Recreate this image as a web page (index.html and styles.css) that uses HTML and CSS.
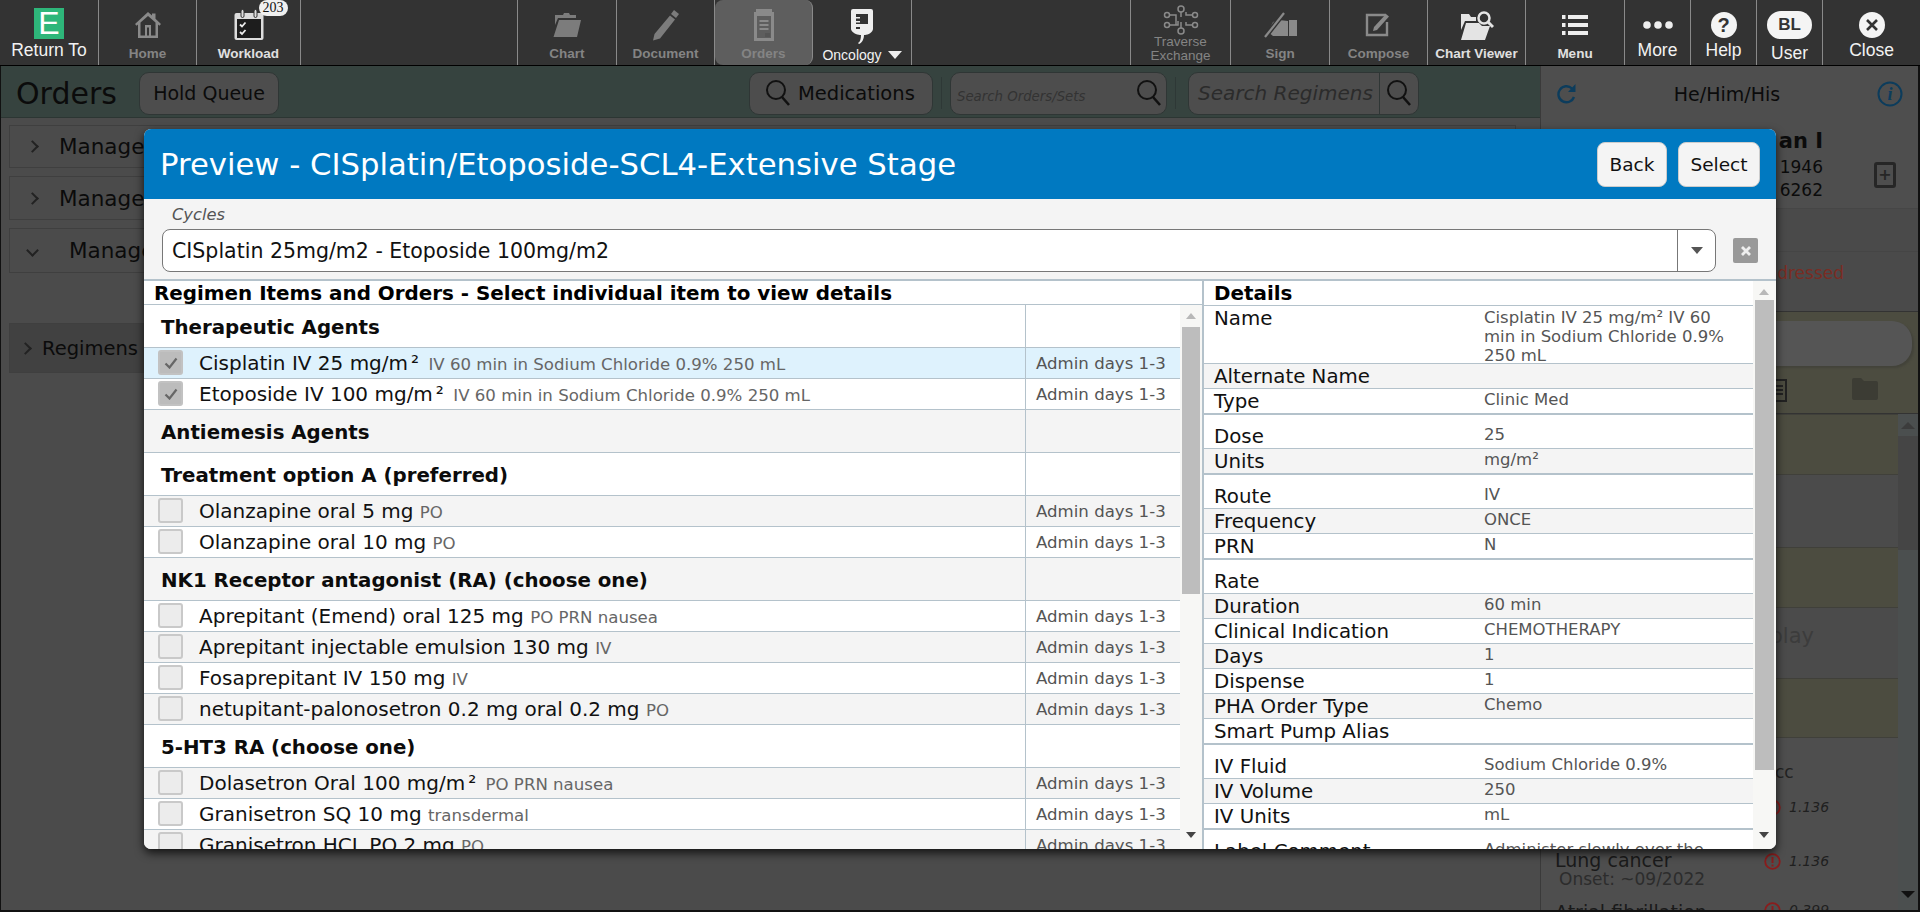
FILE: index.html
```html
<!DOCTYPE html>
<html lang="en">
<head>
<meta charset="utf-8">
<title>Orders</title>
<link rel="stylesheet" href="styles.css">
</head>
<body>
<div class="page">
  <header class="topbar">
    <div class="nav w99 on"><div class="ic"><span class="elogo">E</span></div><span class="lab">Return To</span></div>
    <div class="nav w98 dis"><div class="ic"><svg width="26" height="27" viewBox="0 0 26 27"><path fill="#8a8a8a" d="M13 0l4 3.6V1.5h3.5v5.2L26 12l-1.6 1.8-1.4-1.3V26H3V12.5l-1.4 1.3L0 12zM13 4L5.5 10.6V23.5H10V13h6v10.5h4.500V10.600zM12 15.500V23.500h2V15.500z"/></svg></div><span class="lab bold">Home</span></div>
    <div class="nav w104 on bold-on"><div class="ic"><svg width="32" height="32" viewBox="0 0 32 32"><rect x="1.500" y="4" width="29" height="27" rx="2" fill="#ddd"/><rect x="4" y="10" width="24" height="19" fill="#1d1d1d"/><rect x="8" y="0.500" width="3" height="8" rx="1.500" fill="#ddd" stroke="#333"/><rect x="21" y="0.500" width="3" height="8" rx="1.500" fill="#ddd" stroke="#333"/><path d="M7 15.500l2 2 3.500-4M7 23l2 2 3.500-4" fill="none" stroke="#eee" stroke-width="1.800"/></svg><span class="badge">203</span></div><span class="lab bold">Workload</span></div>
    <div class="spacer s1"></div>
    <div class="nav w100 dis first"><div class="ic"><svg width="28" height="24" viewBox="0 0 28 24"><path fill="#7c7c7c" d="M2 2h8l1-2h5l1 2h6v3H5L2 12zM6 7h22l-4 17H0.500z"/></svg></div><span class="lab bold">Chart</span></div>
    <div class="nav w98 dis"><div class="ic"><svg width="28" height="34" viewBox="0 0 28 34"><path fill="#7c7c7c" d="M22 2l5 4-3 4-5-4zM18 7.500l5 4-15 19-7 2 1.500-6.500z"/></svg></div><span class="lab bold">Document</span></div>
    <div class="nav w98 dis cur"><div class="ic"><svg width="22" height="32" viewBox="0 0 22 32"><path fill="#8a8a8a" d="M1 3h20v29H1zM4 7v22h14V7z"/><path fill="#8a8a8a" d="M3 0h16v4H3zM6.500 11h9v2h-9zM6.500 15h9v2h-9zM6.500 19h9v2h-9z"/><rect x="12" y="24" width="5" height="4" fill="#555"/></svg></div><span class="lab bold">Orders</span></div>
    <div class="nav w99 on"><div class="ic tall"><svg width="22" height="36" viewBox="0 0 22 36"><path fill="#eee" d="M2 0h18a2 2 0 0 1 2 2v18c0 3-5 6-8 6h-1c0 4-2 8-5 9l-1-1c2-1 3-4 3-8h-1c-3 0-9-3-9-6V2a2 2 0 0 1 2-2z"/><rect x="5" y="5" width="12" height="10" fill="#333"/><rect x="5" y="8" width="4" height="1.500" fill="#eee"/><rect x="5" y="12" width="4" height="1.500" fill="#eee"/><rect x="5" y="18" width="4" height="2" fill="#333"/></svg></div><span class="lab onc">Oncology<i class="tri"></i></span></div>
    <div class="spacer s2"></div>
    <div class="nav w101 dis tight first"><div class="ic"><svg width="36" height="30" viewBox="0 0 36 30" fill="none" stroke="#8a8a8a" stroke-width="1.500"><circle cx="18" cy="4" r="3"/><circle cx="18" cy="26" r="3"/><circle cx="4" cy="10" r="2.500"/><circle cx="32" cy="10" r="2.500"/><circle cx="4" cy="20" r="2.500"/><circle cx="32" cy="20" r="2.500"/><path d="M7 10h6v10M29 10h-6v-3M18 7v5M18 17v6M7 20h8v-4M29 20h-6v-3"/></svg></div><span class="lab two">Traverse<br>Exchange</span></div>
    <div class="nav w99 dis"><div class="ic"><svg width="33" height="26" viewBox="0 0 33 26"><path fill="#8a8a8a" d="M25 8h8v16h-8zM9 10l6-2 9 1v15H9l-5-4z"/><path d="M1 25L20 1" stroke="#333" stroke-width="5"/><path d="M1 25L20 1" stroke="#8a8a8a" stroke-width="2.200"/></svg></div><span class="lab bold">Sign</span></div>
    <div class="nav w98 dis"><div class="ic"><svg width="28" height="24" viewBox="0 0 28 24" fill="none"><path d="M21 2H2v20h20V9" stroke="#8a8a8a" stroke-width="2.400"/><path d="M8 18l1-4L21 1l3 2.500L12 17z" fill="#8a8a8a"/></svg></div><span class="lab bold">Compose</span></div>
    <div class="nav w98 on"><div class="ic"><svg width="34" height="30" viewBox="0 0 34 30"><path fill="#e4e4e4" d="M1 4h8l2 3h5v4H5L1 20z"/><path fill="#e4e4e4" d="M6 13h13l3 3h8L25 30H1z"/><circle cx="24" cy="8" r="5.500" fill="#333" stroke="#e4e4e4" stroke-width="2.500"/><path d="M28 12l5 5" stroke="#e4e4e4" stroke-width="3"/></svg></div><span class="lab bold">Chart Viewer</span></div>
    <div class="nav w99 on"><div class="ic"><svg width="26" height="20" viewBox="0 0 26 20" fill="#eee"><rect width="3.500" height="4"/><rect x="6" width="20" height="4"/><rect y="8" width="3.500" height="4"/><rect x="6" y="8" width="20" height="4"/><rect y="16" width="3.500" height="4"/><rect x="6" y="16" width="20" height="4"/></svg></div><span class="lab bold">Menu</span></div>
    <div class="nav w66 on"><div class="ic"><svg width="30" height="8" viewBox="0 0 30 8" fill="#eee"><circle cx="4" cy="4" r="3.800"/><circle cx="15" cy="4" r="3.800"/><circle cx="26" cy="4" r="3.800"/></svg></div><span class="lab">More</span></div>
    <div class="nav w66 on"><div class="ic"><span class="disc">?</span></div><span class="lab">Help</span></div>
    <div class="nav w66 on"><div class="ic"><span class="userpill">BL</span></div><span class="lab low">User</span></div>
    <div class="nav grow on last"><div class="ic"><span class="disc x"><svg width="14" height="14" viewBox="0 0 14 14"><path d="M2 2l10 10M12 2L2 12" stroke="#333" stroke-width="2.600"/></svg></span></div><span class="lab">Close</span></div>
  </header>

  <main class="main">
    <section class="left">
      <div class="phead">
        <h1 class="ptitle">Orders</h1>
        <button class="bgbtn hold">Hold Queue</button>
        <button class="bgbtn meds"><svg class="mag" width="26" height="28" viewBox="0 0 26 28"><circle cx="11" cy="11" r="9" fill="none" stroke="#111" stroke-width="2"/><path d="M17 18l7 8" stroke="#111" stroke-width="2.500"/></svg>Medications</button>
        <i class="vsep"></i>
        <div class="bgbtn sorders"><em>Search Orders/Sets</em><svg class="mag" width="26" height="28" viewBox="0 0 26 28"><circle cx="11" cy="11" r="9" fill="none" stroke="#111" stroke-width="2"/><path d="M17 18l7 8" stroke="#111" stroke-width="2.500"/></svg></div>
        <i class="vsep"></i>
        <div class="bgbtn sreg"><em>Search Regimens</em><span class="regbtn"><svg class="mag" width="26" height="28" viewBox="0 0 26 28"><circle cx="11" cy="11" r="9" fill="none" stroke="#111" stroke-width="2"/><path d="M17 18l7 8" stroke="#111" stroke-width="2.500"/></svg></span></div>
      </div>
      <div class="acc">
        <div class="acc-row h43"><i class="chev"></i><span>Manage</span></div>
        <div class="acc-row h44"><i class="chev"></i><span>Manage</span></div>
        <div class="acc-row h45 open"><i class="chev down"></i><span>Manage</span></div>
        <div class="acc-row reg"><i class="chev"></i><span>Regimens</span></div>
      </div>
    </section>

    <aside class="right">
      <div class="pat">
        <div class="pat-top">
          <svg width="20" height="22" viewBox="0 0 20 22" fill="none"><path d="M17 14a8 8 0 1 1-2-8.500" stroke="#0c3c5c" stroke-width="2.400"/><path d="M18.500 1v8h-7.500z" fill="#0c3c5c"/></svg>
          <span class="pron">He/Him/His</span>
          <svg width="26" height="26" viewBox="0 0 26 26"><circle cx="13" cy="13" r="11.500" fill="none" stroke="#0c3c5c" stroke-width="2"/><text x="13" y="19" text-anchor="middle" class="itxt">i</text></svg>
        </div>
        <div class="pat-main">
          <div class="pat-info"><b>an I</b><span>1946</span><span>6262</span></div>
          <span class="plus">+</span>
        </div>
      </div>
      <div class="band b1"></div>
      <div class="band b2"><span>ddressed</span></div>
      <div class="yellow">
        <div class="pill"></div>
        <div class="tools">
          <svg width="16" height="26" viewBox="0 0 16 26"><path fill="none" stroke="#222" stroke-width="2" d="M1 4h14v21H1z"/><path stroke="#222" stroke-width="2" d="M4 10h8M4 14h8M4 18h8"/></svg>
          <svg class="folder" width="26" height="22" viewBox="0 0 26 22"><path fill="#3c3c34" d="M0 2a2 2 0 0 1 2-2h7l3 3h12a2 2 0 0 1 2 2v15a2 2 0 0 1-2 2H2a2 2 0 0 1-2-2z"/></svg>
        </div>
      </div>
      <div class="plist">
        <div class="items">
          <div class="it ye h61"></div>
          <div class="it h72"></div>
          <div class="it ye h61"></div>
          <div class="it h70 playrow"><span>play</span></div>
          <div class="it ye h60"></div>
          <div class="prow first"><span></span><span class="cc">cc</span></div>
          <div class="prow second"><span></span><span class="score"><svg width="17" height="17" viewBox="0 0 17 17"><circle cx="8.500" cy="8.500" r="7.300" fill="none" stroke="#8a1c1c" stroke-width="1.800"/><path d="M8.500 4v6M8.500 11.500v2" stroke="#8a1c1c" stroke-width="2"/></svg><em>1.136</em></span></div>
          <div class="prow lung"><span>Lung cancer<small>Onset: ~09/2022</small></span><span class="score"><svg width="17" height="17" viewBox="0 0 17 17"><circle cx="8.500" cy="8.500" r="7.300" fill="none" stroke="#8a1c1c" stroke-width="1.800"/><path d="M8.500 4v6M8.500 11.500v2" stroke="#8a1c1c" stroke-width="2"/></svg><em>1.136</em></span></div>
          <div class="prow af"><span>Atrial fibrillation</span><span class="score"><svg width="17" height="17" viewBox="0 0 17 17"><circle cx="8.500" cy="8.500" r="7.300" fill="none" stroke="#8a1c1c" stroke-width="1.800"/><path d="M8.500 4v6M8.500 11.500v2" stroke="#8a1c1c" stroke-width="2"/></svg><em>0.399</em></span></div>
        </div>
        <div class="bgscroll"><i class="up"></i><div class="bgthumb"></div><i class="dn"></i></div>
      </div>
    </aside>
  </main>

  <div class="modal">
    <div class="m-head">
      <h2 class="m-title">Preview - CISplatin/Etoposide-SCL4-Extensive Stage</h2>
      <button class="m-btn back">Back</button>
      <button class="m-btn sel">Select</button>
    </div>
    <div class="m-cycles">
      <div class="cy-label">Cycles</div>
      <div class="cy-row">
        <div class="cy-select"><span class="cy-val">CISplatin 25mg/m2 - Etoposide 100mg/m2</span><span class="cy-drop"><i class="tri dark"></i></span></div>
        <span class="cy-clear"><svg width="14" height="14" viewBox="0 0 14 14"><path d="M3 3l8 8M11 3l-8 8" stroke="#eee" stroke-width="2.800"/></svg></span>
      </div>
    </div>
    <div class="m-body">
      <div class="col-l">
        <div class="th">Regimen Items and Orders - Select individual item to view details</div>
        <div class="scroller">
          <div class="rows">
            <div class="group"><span class="g-name">Therapeutic Agents</span><span class="adm"></span></div>
            <div class="row selrow"><i class="cb on"><svg width="14" height="12" viewBox="0 0 14 12"><path d="M1.500 6.500l4 4 7-9" fill="none" stroke="#666" stroke-width="2.200"/></svg></i><span class="r-name">Cisplatin IV 25 mg/m<span class="sq">²</span> <small>IV 60 min in Sodium Chloride 0.9% 250 mL</small></span><span class="adm">Admin days 1-3</span></div>
            <div class="row"><i class="cb on"><svg width="14" height="12" viewBox="0 0 14 12"><path d="M1.500 6.500l4 4 7-9" fill="none" stroke="#666" stroke-width="2.200"/></svg></i><span class="r-name">Etoposide IV 100 mg/m<span class="sq">²</span> <small>IV 60 min in Sodium Chloride 0.9% 250 mL</small></span><span class="adm">Admin days 1-3</span></div>
            <div class="group alt"><span class="g-name">Antiemesis Agents</span><span class="adm"></span></div>
            <div class="group"><span class="g-name">Treatment option A (preferred)</span><span class="adm"></span></div>
            <div class="row alt"><i class="cb"></i><span class="r-name">Olanzapine oral 5 mg <small>PO</small></span><span class="adm">Admin days 1-3</span></div>
            <div class="row"><i class="cb"></i><span class="r-name">Olanzapine oral 10 mg <small>PO</small></span><span class="adm">Admin days 1-3</span></div>
            <div class="group alt"><span class="g-name">NK1 Receptor antagonist (RA) (choose one)</span><span class="adm"></span></div>
            <div class="row"><i class="cb"></i><span class="r-name">Aprepitant (Emend) oral 125 mg <small>PO PRN nausea</small></span><span class="adm">Admin days 1-3</span></div>
            <div class="row alt"><i class="cb"></i><span class="r-name">Aprepitant injectable emulsion 130 mg <small>IV</small></span><span class="adm">Admin days 1-3</span></div>
            <div class="row"><i class="cb"></i><span class="r-name">Fosaprepitant IV 150 mg <small>IV</small></span><span class="adm">Admin days 1-3</span></div>
            <div class="row alt"><i class="cb"></i><span class="r-name">netupitant-palonosetron 0.2 mg oral 0.2 mg <small>PO</small></span><span class="adm">Admin days 1-3</span></div>
            <div class="group"><span class="g-name">5-HT3 RA (choose one)</span><span class="adm"></span></div>
            <div class="row alt"><i class="cb"></i><span class="r-name">Dolasetron Oral 100 mg/m<span class="sq">²</span> <small>PO PRN nausea</small></span><span class="adm">Admin days 1-3</span></div>
            <div class="row"><i class="cb"></i><span class="r-name">Granisetron SQ 10 mg <small>transdermal</small></span><span class="adm">Admin days 1-3</span></div>
            <div class="row alt"><i class="cb"></i><span class="r-name">Granisetron HCL PO 2 mg <small>PO</small></span><span class="adm">Admin days 1-3</span></div>
          </div>
          <div class="sb"><i class="up"></i><div class="thumb t-l"></div><i class="dn"></i></div>
        </div>
      </div>
      <div class="col-r">
        <div class="d-rows">
          <div class="th d">Details</div>
          <div class="d name"><span class="k">Name</span><span class="v">Cisplatin IV 25 mg/m² IV 60 min in Sodium Chloride 0.9% 250 mL</span></div>
          <div class="d alt"><span class="k">Alternate Name</span><span class="v"></span></div>
          <div class="d end"><span class="k">Type</span><span class="v">Clinic Med</span></div>
          <div class="d start"><span class="k">Dose</span><span class="v">25</span></div>
          <div class="d alt end"><span class="k">Units</span><span class="v">mg/m²</span></div>
          <div class="d start"><span class="k">Route</span><span class="v">IV</span></div>
          <div class="d alt"><span class="k">Frequency</span><span class="v">ONCE</span></div>
          <div class="d end"><span class="k">PRN</span><span class="v">N</span></div>
          <div class="d start"><span class="k">Rate</span><span class="v"></span></div>
          <div class="d alt"><span class="k">Duration</span><span class="v">60 min</span></div>
          <div class="d"><span class="k">Clinical Indication</span><span class="v">CHEMOTHERAPY</span></div>
          <div class="d alt"><span class="k">Days</span><span class="v">1</span></div>
          <div class="d"><span class="k">Dispense</span><span class="v">1</span></div>
          <div class="d alt"><span class="k">PHA Order Type</span><span class="v">Chemo</span></div>
          <div class="d end"><span class="k">Smart Pump Alias</span><span class="v"></span></div>
          <div class="d start"><span class="k">IV Fluid</span><span class="v">Sodium Chloride 0.9%</span></div>
          <div class="d alt"><span class="k">IV Volume</span><span class="v">250</span></div>
          <div class="d end"><span class="k">IV Units</span><span class="v">mL</span></div>
          <div class="d start"><span class="k">Label Comment</span><span class="v">Administer slowly over the</span></div>
        </div>
        <div class="sb wide"><i class="up"></i><div class="thumb t-r"></div><i class="dn"></i></div>
      </div>
    </div>
  </div>
</div>
</body>
</html>
```
FILE: styles.css
```css
* { box-sizing: border-box; }
html, body { margin: 0; padding: 0; height: 100%; overflow: hidden; }
body { font-family: "DejaVu Sans", Verdana, sans-serif; background: #4b4b4b; color: #111; }
.page { position: relative; width: 1920px; height: 912px; overflow: hidden; display: flex; flex-direction: column; }
button { font: inherit; color: inherit; }

/* top bar */
.topbar { height: 66px; flex: none; display: flex; background: #333; border-bottom: 1px solid #000; font-family: "Liberation Sans", Arial, sans-serif; }
.nav { height: 65px; padding-top: 8px; display: flex; flex-direction: column; align-items: center; border-right: 1px solid #8a8a8a; flex: none; }
.nav.last { border-right: 0; }
.nav.first { border-left: 1px solid #8a8a8a; }
.w66 { width: 66px; } .w98 { width: 98px; } .w99 { width: 99px; } .w100 { width: 100px; } .w101 { width: 101px; } .w104 { width: 104px; }
.nav.grow { flex: 1; }
.spacer { flex: none; height: 65px; }
.s1 { width: 216px; } .s2 { width: 218px; }
.ic { height: 34px; position: relative; display: flex; align-items: center; justify-content: center; }
.ic.tall { margin-top: 2px; }
.lab { font-size: 17.5px; line-height: 16px; white-space: nowrap; }
.on .lab { color: #f2f2f2; }
.lab.bold { font-size: 13.500px; font-weight: 700; margin-top: 4px; }
.dis .lab { color: #848484; }
.on .lab.bold { color: #e0e0e0; }
.lab.onc { font-size: 14px; margin-top: 3px; display: flex; align-items: center; gap: 6px; }
.lab.low { margin-top: 3px; }
.tight { padding-top: 5px; }
.tight .ic { height: 30px; }
.lab.two { font-size: 13.500px; font-weight: 400; line-height: 14px; text-align: center; }
.tri { display: inline-block; width: 0; height: 0; border-left: 7px solid transparent; border-right: 7px solid transparent; border-top: 8px solid #eee; }
.tri.dark { border-left-width: 6px; border-right-width: 6px; border-top: 7px solid #555; }
.elogo { width: 30px; height: 31px; margin-top: -4px; background: #2eb67a; color: #fff; font-size: 32px; line-height: 31px; text-align: center; }
.badge { position: absolute; left: 26px; top: -8px; width: 29px; height: 16px; border-radius: 8px; background: #f0f0f0; color: #111; font: 14px/16px "Liberation Serif", serif; text-align: center; }
.cur { background: #5e5e5e; border-radius: 8px; }
.disc { width: 26px; height: 26px; border-radius: 50%; background: #f4f4f4; color: #333; font-weight: 700; font-size: 20px; line-height: 26px; text-align: center; display: flex; align-items: center; justify-content: center; }
.userpill { width: 45px; height: 28px; border-radius: 14px; background: #f4f4f4; color: #333; font-weight: 700; font-size: 17px; line-height: 28px; text-align: center; }

/* background page */
.main { flex: 1; min-height: 0; display: flex; border-left: 1px solid #111; border-bottom: 2px solid #111; }
.left { width: 1539px; flex: none; }
.phead { height: 52px; background: #36433f; border-bottom: 1px solid #2c3633; display: flex; align-items: center; padding: 3px 0 0 15px; }
.ptitle { margin: 0; width: 123px; font-size: 30px; font-weight: 400; color: #0b0b0b; }
.bgbtn { height: 43px; border: 1px solid #2f3635; border-radius: 10px; background: #4d4d4d; font-size: 19.500px; color: #0b0b0b; display: flex; align-items: center; }
.hold { width: 140px; justify-content: center; padding: 0; font-size: 19px; }
.meds { width: 184px; margin-left: 470px; padding: 0 0 0 15px; gap: 7px; }
.vsep { width: 1px; height: 32px; background: #2e3836; margin: 0 8px; flex: none; }
.sorders { width: 217px; justify-content: space-between; padding: 0 4px 0 6px; margin-left: 0; }
.sorders em { font-size: 13.300px; color: #333; margin-top: 6px; }
.sreg { width: 231px; margin-left: 4px; padding-left: 9px; justify-content: space-between; }
.sreg em { color: #2b2b2b; font-size: 20px; }
.regbtn { width: 39px; height: 41px; border-left: 1px solid #2f3635; display: flex; align-items: center; justify-content: center; flex: none; }
.acc { padding: 7px 24px 0 8px; height: 200px; }
.acc-row { display: flex; align-items: center; border: 1px solid #3f3f3f; margin-bottom: 8px; font-size: 21.500px; color: #0b0b0b; padding-left: 18px; gap: 22px; }
.h43 { height: 43px; } .h44 { height: 44px; } .h45 { height: 45px; margin-bottom: 50px; }
.acc-row.open { gap: 32px; }
.acc-row.reg { height: 50px; background: #414141; gap: 12px; font-size: 19.500px; padding-left: 11px; }
.chev { width: 9px; height: 9px; border-top: 2px solid #222; border-right: 2px solid #222; transform: rotate(45deg); flex: none; }
.chev.down { transform: rotate(135deg); }

.right { flex: 1; min-width: 0; display: flex; flex-direction: column; background: #4e4e4e; border-left: 1px solid #3a3a3a; border-right: 2px solid #111; }
.pat { height: 142px; flex: none; }
.pat-top { height: 52px; display: flex; align-items: center; justify-content: space-between; padding: 3px 15px 0 16px; }
.pron { font-size: 19px; color: #0b0b0b; }
.itxt { font: italic 700 18px "Liberation Serif", serif; fill: #0c3c5c; }
.pat-main { display: flex; align-items: center; padding-top: 8px; }
.pat-info { width: 283px; display: flex; flex-direction: column; align-items: flex-end; color: #0b0b0b; font-size: 17px; line-height: 23px; padding-right: 1px; }
.pat-info b { font-size: 21px; line-height: 30px; }
.plus { margin: 22px 0 0 50px; width: 22px; height: 26px; border: 3px solid #262626; border-radius: 3px; font-size: 16px; line-height: 19px; font-weight: 700; text-align: center; color: #262626; }
.band { flex: none; border-bottom: 1px solid #454545; }
.b1 { height: 44px; background: #4a4a4a; border-top: 1px solid #464646; }
.b2 { height: 60px; background: #4a4a4a; border-bottom: 1px solid #333; padding: 11px 0 0 211px; color: #7a2c23; font-size: 17px; white-space: nowrap; }
.b2 span { display: block; width: 92px; margin-left: 0; text-align: right; }
.yellow { height: 102px; flex: none; background: #4c4c40; border-bottom: 1px solid #333; padding: 9px 6px 0 10px; }
.pill { height: 45px; border-radius: 20px; background: #555; box-shadow: 2px 2px 2px #43433a; }
.tools { display: flex; padding: 10px 0 0 220px; align-items: center; }
.folder { margin-left: 65px; }
.plist { flex: 1; min-height: 0; display: flex; overflow: hidden; }
.items { width: 357px; flex: none; overflow: hidden; }
.it { background: #4b4b4b; }
.it.ye { background: #4c4c40; border-top: 1px solid #40403a; border-bottom: 1px solid #40403a; }
.h60 { height: 60px; } .h61 { height: 61px; } .h70 { height: 70px; } .h72 { height: 72px; }
.playrow { color: #3c3c3c; font-size: 21px; text-align: right; padding: 16px 84px 0 0; }
.prow { display: grid; grid-template-columns: 1fr 134px; padding-left: 14px; color: #1a1a1a; font-size: 19px; }
.prow.first { height: 57px; padding-top: 24px; }
.prow.second { height: 53px; padding-top: 4px; }
.cc { padding-left: 11px; color: #222; font-size: 17px; }
.lung { height: 54px; padding-top: 2px; line-height: 20px; }
.lung small { display: block; font-size: 17px; line-height: 18px; padding-left: 4px; color: #2c2c2c; }
.lung .score { margin-top: 3px; }
.af { line-height: 20px; }
.score { display: flex; align-items: flex-start; gap: 8px; font-size: 14px; }
.score em { color: #1f1f1f; line-height: 17px; }
.bgscroll { width: 20px; flex: none; background: #4b4f4f; position: relative; padding-top: 22px; }
.bgthumb { height: 114px; background: #454545; }
.bgscroll .up, .bgscroll .dn { position: absolute; left: 3px; width: 0; height: 0; border-left: 7px solid transparent; border-right: 7px solid transparent; }
.bgscroll .up { top: 8px; border-bottom: 7px solid #3c3c3c; }
.bgscroll .dn { bottom: 12px; border-top: 7px solid #111; }

/* modal */
.modal { position: absolute; left: 144px; top: 129px; width: 1632px; height: 720px; border-radius: 7px; overflow: hidden; background: #fff; box-shadow: 0 4px 10px rgba(0,0,0,.75); display: flex; flex-direction: column; }
.m-head { height: 70px; flex: none; background: #0079c1; display: flex; align-items: center; padding: 0 16px 0 16px; }
.m-title { margin: 0; flex: 1; color: #fff; font-size: 30.700px; font-weight: 400; white-space: nowrap; }
.m-btn { height: 45px; border: 1px solid #ccc; border-radius: 8px; background: #f4f4f4; color: #111; padding: 0; font-size: 18.500px; }
.back { width: 70px; margin-right: 11px; }
.sel { width: 82px; }
.m-cycles { height: 80px; flex: none; background: #f4f4f4; padding: 3px 0 0 18px; }
.cy-label { font-size: 16.300px; font-style: italic; line-height: 25px; padding-left: 10px; color: #555; }
.cy-row { display: flex; align-items: center; margin-top: 2px; }
.cy-select { width: 1554px; height: 43px; background: #fff; border: 1px solid #777; border-radius: 8px; display: flex; align-items: center; justify-content: space-between; }
.cy-val { padding-left: 9px; font-size: 20.500px; color: #111; }
.cy-drop { width: 38px; height: 41px; border-left: 1px solid #777; display: flex; align-items: center; justify-content: center; }
.cy-clear { width: 25px; height: 25px; margin-left: 17px; border-radius: 2px; background: #999; display: flex; align-items: center; justify-content: center; }
.m-body { flex: 1; min-height: 0; display: flex; border-top: 2px solid #b4c2cb; overflow: hidden; }
.col-l { width: 1060px; flex: none; display: flex; flex-direction: column; border-right: 2px solid #b4c2cb; }
.th { height: 24px; flex: none; border-bottom: 1px solid #b4c2cb; font-weight: 700; font-size: 19.900px; line-height: 26px; padding-left: 10px; color: #000; white-space: nowrap; }
.scroller { flex: 1; min-height: 0; display: flex; }
.rows { flex: 1; min-width: 0; overflow: hidden; }
.group, .row { display: flex; border-bottom: 1px solid #b4c2cb; background: #fff; }
.group { height: 43px; }
.row { height: 31px; }
.alt { background: #f4f4f4; }
.selrow { background: #def2fd; }
.g-name { flex: 1; min-width: 0; padding-left: 17px; font-weight: 700; font-size: 19.800px; line-height: 45px; color: #0c0c0c; }
.adm { width: 155px; flex: none; border-left: 1px solid #b4c2cb; padding-left: 10px; font-size: 16.600px; line-height: 31px; color: #555; }
.cb { width: 25px; height: 25px; flex: none; margin: 2px 0 0 14px; border: 2px solid #c9c9c9; border-radius: 3px; background: #ececec; display: flex; align-items: center; justify-content: center; }
.cb.on { background: #bcbcbc; border-color: #c2c2c2; }
.r-name { flex: 1; min-width: 0; padding-left: 16px; font-size: 20px; line-height: 30px; white-space: nowrap; overflow: hidden; color: #111; }
.r-name small { font-size: 16.600px; color: #666; }
.sq { margin: 0 3px; }
.sb { width: 22px; flex: none; position: relative; background: #f7f7f5; padding: 22px 2px 0; }
.sb.wide { width: 23px; padding-top: 19px; }
.thumb { background: #bdbdbd; }
.t-l { height: 267px; }
.t-r { height: 470px; }
.sb .up, .sb .dn { position: absolute; left: 6px; width: 0; height: 0; border-left: 5px solid transparent; border-right: 5px solid transparent; }
.sb .up { top: 8px; border-bottom: 6px solid #b8b8b8; }
.sb .dn { bottom: 11px; border-top: 6px solid #444; }
.col-r { flex: 1; min-width: 0; display: flex; overflow: hidden; }
.d-rows { flex: 1; min-width: 0; overflow: hidden; }
.th.d { padding-left: 10px; }
.d { height: 25px; display: flex; border-bottom: 1px solid #b4c2cb; padding-left: 10px; }
.d.name { height: 58px; }
.d.end { height: 26px; border-bottom: 2px solid #b4c2cb; }
.d.start { height: 34px; padding-top: 9px; }
.k { width: 270px; flex: none; font-size: 19.800px; line-height: 24px; padding-top: 1px; color: #111; white-space: nowrap; }
.v { width: 252px; flex: none; font-size: 16.500px; line-height: 19px; padding-top: 1px; color: #555; }
.d.name .v { padding-top: 2px; }
```
